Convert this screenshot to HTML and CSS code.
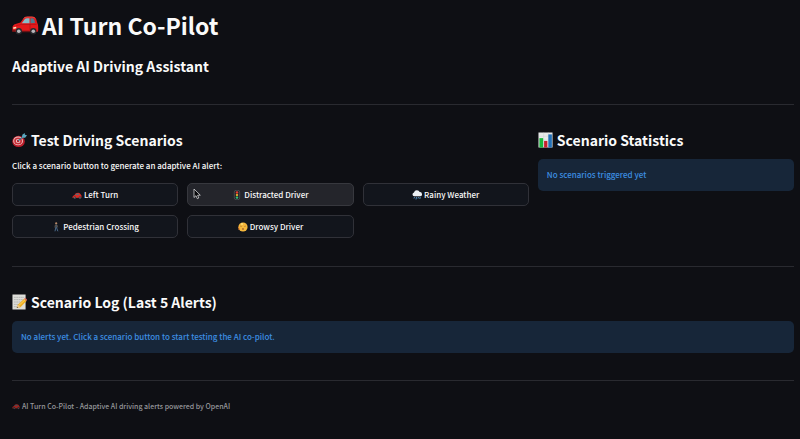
FILE: index.html
```html
<!DOCTYPE html>
<html lang="en">
<head>
<meta charset="utf-8">
<meta name="viewport" content="width=device-width, initial-scale=1">
<title>AI Turn Co-Pilot</title>
<link rel="stylesheet" href="styles.css">
</head>
<body>
<svg class="defs" aria-hidden="true">
  <symbol id="car" viewBox="0 0 27 22">
    <path d="M.500 17.500V13.500q0-2.500 3-3.500L8.500 8.500 11 5Q12.500 2.800 15.500 2.800h4.500q3.500 0 4.200 2.500L25.300 9q.9 1.500.9 4v3.500q0 1.500-2 1.500H3z" fill="#e3191b"/>
    <path d="M9.800 9.300l2.700-3.800Q13.300 4.300 15.300 4.300h2.200v5z" fill="#86bcc9"/>
    <path d="M18.500 4.300h1.800q1.600 0 2 1.500L23 9l-4.500.300z" fill="#4d7e91"/>
    <path d="M11.500 4.500q1.200-1.500 3.500-1.500h5q2.500 0 3.200 1.500" fill="none" stroke="#f4584d" stroke-width=".8"/>
    <path d="M4 11.700l5.500-1.300h15M18 10v6" fill="none" stroke="#a80f16" stroke-width=".6"/>
    <path d="M1 13.500l3-.8.5 1.600-3 .8z" fill="#ffe5bc"/>
    <path d="M.500 16.300h3v1.700h-3zM10 16.800h8v1.500h-8z" fill="#6b1215"/>
    <circle cx="6.800" cy="17.300" r="3.200" fill="#292a2e"/><circle cx="6.800" cy="17.300" r="1.800" fill="#b7b7bc"/>
    <circle cx="21.300" cy="17.300" r="3.200" fill="#292a2e"/><circle cx="21.300" cy="17.300" r="1.800" fill="#b7b7bc"/>
  </symbol>
  <symbol id="racer" viewBox="0 0 10 10">
    <path d="M.300 7.500Q.500 5.500 2.500 5L3.800 3.200q3-1 4.200.300L9.500 5.500v2.300l-8.500.200z" fill="#d92b25"/>
    <path d="M3 5l1.400-1.300 2.200-.200.400 1.500z" fill="#546b77"/>
    <circle cx="2.800" cy="7.700" r="1.300" fill="#36373b"/><circle cx="8" cy="7.700" r="1.300" fill="#36373b"/>
    <circle cx="2.800" cy="7.700" r=".5" fill="#aaa"/><circle cx="8" cy="7.700" r=".5" fill="#aaa"/>
  </symbol>
  <symbol id="dart" viewBox="0 0 16 16">
    <ellipse cx="7" cy="9.500" rx="6.700" ry="6" fill="#ba1d2b"/>
    <ellipse cx="6.500" cy="9" rx="5.200" ry="4.700" fill="#edc8c4"/>
    <ellipse cx="6.500" cy="9" rx="4.200" ry="3.800" fill="#c92e39"/>
    <ellipse cx="6.500" cy="9" rx="2.400" ry="2.200" fill="#f0d5cf"/>
    <circle cx="6.500" cy="9" r="1.400" fill="#bf1e2c"/>
    <path d="M6.500 9L13 3.500" stroke="#356f86" stroke-width="1.200"/>
    <path d="M10.500 5.500l.5-3L13.500.500 13.800 2.500 16 3l-2 2.500z" fill="#5ba6bd"/>
  </symbol>
  <symbol id="chart" viewBox="0 0 16 16">
    <path d="M.500 0h15v16H.500z" fill="#e7e9e9"/>
    <path d="M1 4h14M1 8h14M1 12h14M6 0v16M11 0v16" stroke="#c8cccf" stroke-width=".4"/>
    <path d="M1.500 6H5.500v10h-4z" fill="#19b63a"/><path d="M6.500 9h3.500v7H6.500z" fill="#c71f2c"/><path d="M11 2h3.800v14H11z" fill="#2370b7"/>
  </symbol>
  <symbol id="memo" viewBox="0 0 16 16">
    <path d="M.500 0h14v16H.500z" fill="#deded9"/>
    <path d="M2 3h11M2 5.500h11M2 8h8M2 10.500h6M2 13h4" stroke="#a6a7a6" stroke-width=".8" stroke-dasharray="2 .5"/>
    <path d="M5 14.500l1.200-3.500L13 4.500l2.500 2.500L9 13.500z" fill="#efaf24"/>
    <path d="M7 12l7-6.500" stroke="#ffda62"/><path d="M13 4.500l1.200-1 2.200 2.200-1 1.300z" fill="#d9665c"/>
    <path d="M5 14.500l1.200-3.500L9 13.500z" fill="#e7c998"/><path d="M5 14.500l.5-1.500 1 1z" fill="#333"/>
  </symbol>
  <symbol id="signal" viewBox="0 0 10 10">
    <rect x="2.300" y=".3" width="5.400" height="9.400" rx="1.800" fill="#24262a" stroke="#55575b" stroke-width=".7"/>
    <circle cx="5" cy="2.400" r="1.200" fill="#e6372f"/><circle cx="5" cy="5" r="1.200" fill="#d9a42c"/><circle cx="5" cy="7.600" r="1.200" fill="#2fc177"/>
  </symbol>
  <symbol id="walker" viewBox="0 0 10 10">
    <circle cx="5.200" cy="1.400" r="1.100" fill="#b98a68"/>
    <path d="M4.300 2.500h1.700l.4 3.500H4.200z" fill="#46525e"/>
    <path d="M4.800 5.500L4 9.300M5.500 5.500l1.400 3.800" stroke="#4a6a8a"/>
    <path d="M4.300 3L3.700 5.500M6 3l.8 2.300" stroke="#84705f" stroke-width=".5"/>
  </symbol>
  <symbol id="rain" viewBox="0 0 10 10">
    <path d="M2.200 6.300a2 2 0 0 1-.2-3.900 3 3 0 0 1 5.700-.3 2.100 2.100 0 0 1 .4 4.200z" fill="#edf0f4"/>
    <path d="M2.500 7L2 8.500M4.500 7L4 9.500M6.500 7L6 8.500M8.300 7l-.5 2" stroke="#5797c9" stroke-width=".9"/>
  </symbol>
  <symbol id="face" viewBox="0 0 10 10">
    <circle cx="5" cy="5" r="4.600" fill="#f6b83c"/>
    <path d="M2 4l1.800.5M6.200 4.500L8 4" stroke="#a06c2c" stroke-width=".6"/>
    <circle cx="5" cy="7" r=".9" fill="#a7652a"/><path d="M.500 5q1 1.500.5 3" stroke="#e77f2e" fill="none"/>
    <circle cx="4" cy="2" r="1" fill="#ffe07a"/>
  </symbol>
</svg>
<main class="page">
  <header>
    <h1 class="title"><svg class="icon icon-title"><use href="#car"/></svg>AI Turn Co-Pilot</h1>
    <h2 class="heading">Adaptive AI Driving Assistant</h2>
  </header>
  <hr class="rule">
  <div class="columns">
    <section class="column-wide">
      <h2 class="heading"><svg class="icon icon-heading"><use href="#dart"/></svg>Test Driving Scenarios</h2>
      <p class="intro">Click a scenario button to generate an adaptive AI alert:</p>
      <div class="scenarios">
        <button class="scenario" type="button"><svg class="icon icon-small"><use href="#racer"/></svg>Left Turn</button>
        <button class="scenario scenario-active" type="button"><svg class="icon icon-small"><use href="#signal"/></svg>Distracted Driver
          <svg class="pointer" viewBox="0 0 8 12" aria-hidden="true"><path d="M1 1v8.500l2-1.800 1.300 3 1.500-.700L4.600 7.200h2.700z" fill="#08080a" stroke="#d5d5d8" stroke-width=".8"/></svg></button>
        <button class="scenario" type="button"><svg class="icon icon-small"><use href="#rain"/></svg>Rainy Weather</button>
        <button class="scenario" type="button"><svg class="icon icon-small"><use href="#walker"/></svg>Pedestrian Crossing</button>
        <button class="scenario" type="button"><svg class="icon icon-small"><use href="#face"/></svg>Drowsy Driver</button>
      </div>
    </section>
    <section class="column-narrow">
      <h2 class="heading"><svg class="icon icon-heading"><use href="#chart"/></svg>Scenario Statistics</h2>
      <p class="notice">No scenarios triggered yet</p>
    </section>
  </div>
  <hr class="rule">
  <section>
    <h2 class="heading"><svg class="icon icon-heading"><use href="#memo"/></svg>Scenario Log (Last 5 Alerts)</h2>
    <p class="notice">No alerts yet. Click a scenario button to start testing the AI co-pilot.</p>
  </section>
  <hr class="rule">
  <footer class="footer"><svg class="icon icon-footer"><use href="#racer"/></svg>AI Turn Co-Pilot - Adaptive AI driving alerts powered by OpenAI</footer>
</main>
</body>
</html>
```
FILE: styles.css
```css
* { box-sizing: border-box; }

body {
  margin: 0;
  background: #0e0f14;
  color: #fafafa;
  font-family: "Noto Sans CJK SC", "Open Sans", sans-serif;
  font-size: 8px;
  font-weight: 500;
  line-height: 16px;
}

h1, h2, p { margin: 0; }

.defs { position: absolute; width: 0; height: 0; }

.page { padding: 7px 6px 16px 12px; }

.title, .heading, .footer { display: flex; align-items: center; }

.title {
  gap: 3px;
  margin-bottom: 12px;
  font-size: 23px;
  font-weight: 700;
  line-height: 36px;
}

.heading {
  gap: 4px;
  font-size: 14px;
  font-weight: 700;
  line-height: 22px;
}

.icon { flex: none; }
.icon-title { width: 27px; height: 22px; }
.icon-heading { width: 15px; height: 16px; }
.icon-small { width: 10px; height: 10px; }
.icon-footer { width: 8px; height: 8px; opacity: .7; }

.rule {
  height: 1px;
  margin: 27px 0 24px;
  border: 0;
  background: #292a30;
}

.columns {
  display: flex;
  gap: 9px;
  padding-bottom: 1px;
}

.column-wide { flex: 1 1 calc(66.67% - 9px); }
.column-narrow { flex: 1 1 calc(33.33% - 9px); }

.intro { margin: 7px 0 9px; }

.scenarios {
  display: grid;
  grid-template-columns: repeat(3, 1fr);
  gap: 9px;
}

.scenario {
  position: relative;
  display: flex;
  align-items: center;
  justify-content: center;
  gap: 2px;
  height: 23px;
  padding: 0 8px;
  border: 1px solid #303138;
  border-radius: 5px;
  background: #12151c;
  color: inherit;
  font: inherit;
}

.scenario-active { background: #24252b; border-color: #37383e; }

.pointer {
  position: absolute;
  top: 4px;
  left: 5px;
  width: 8px;
  height: 12px;
}

.notice {
  margin-top: 8px;
  padding: 8px 9px;
  border-radius: 5px;
  background: #172639;
  color: #3d8fe3;
}

.footer {
  gap: 2px;
  margin-top: -5px;
  color: #96979b;
  font-size: 7px;
  line-height: 12px;
}
```
